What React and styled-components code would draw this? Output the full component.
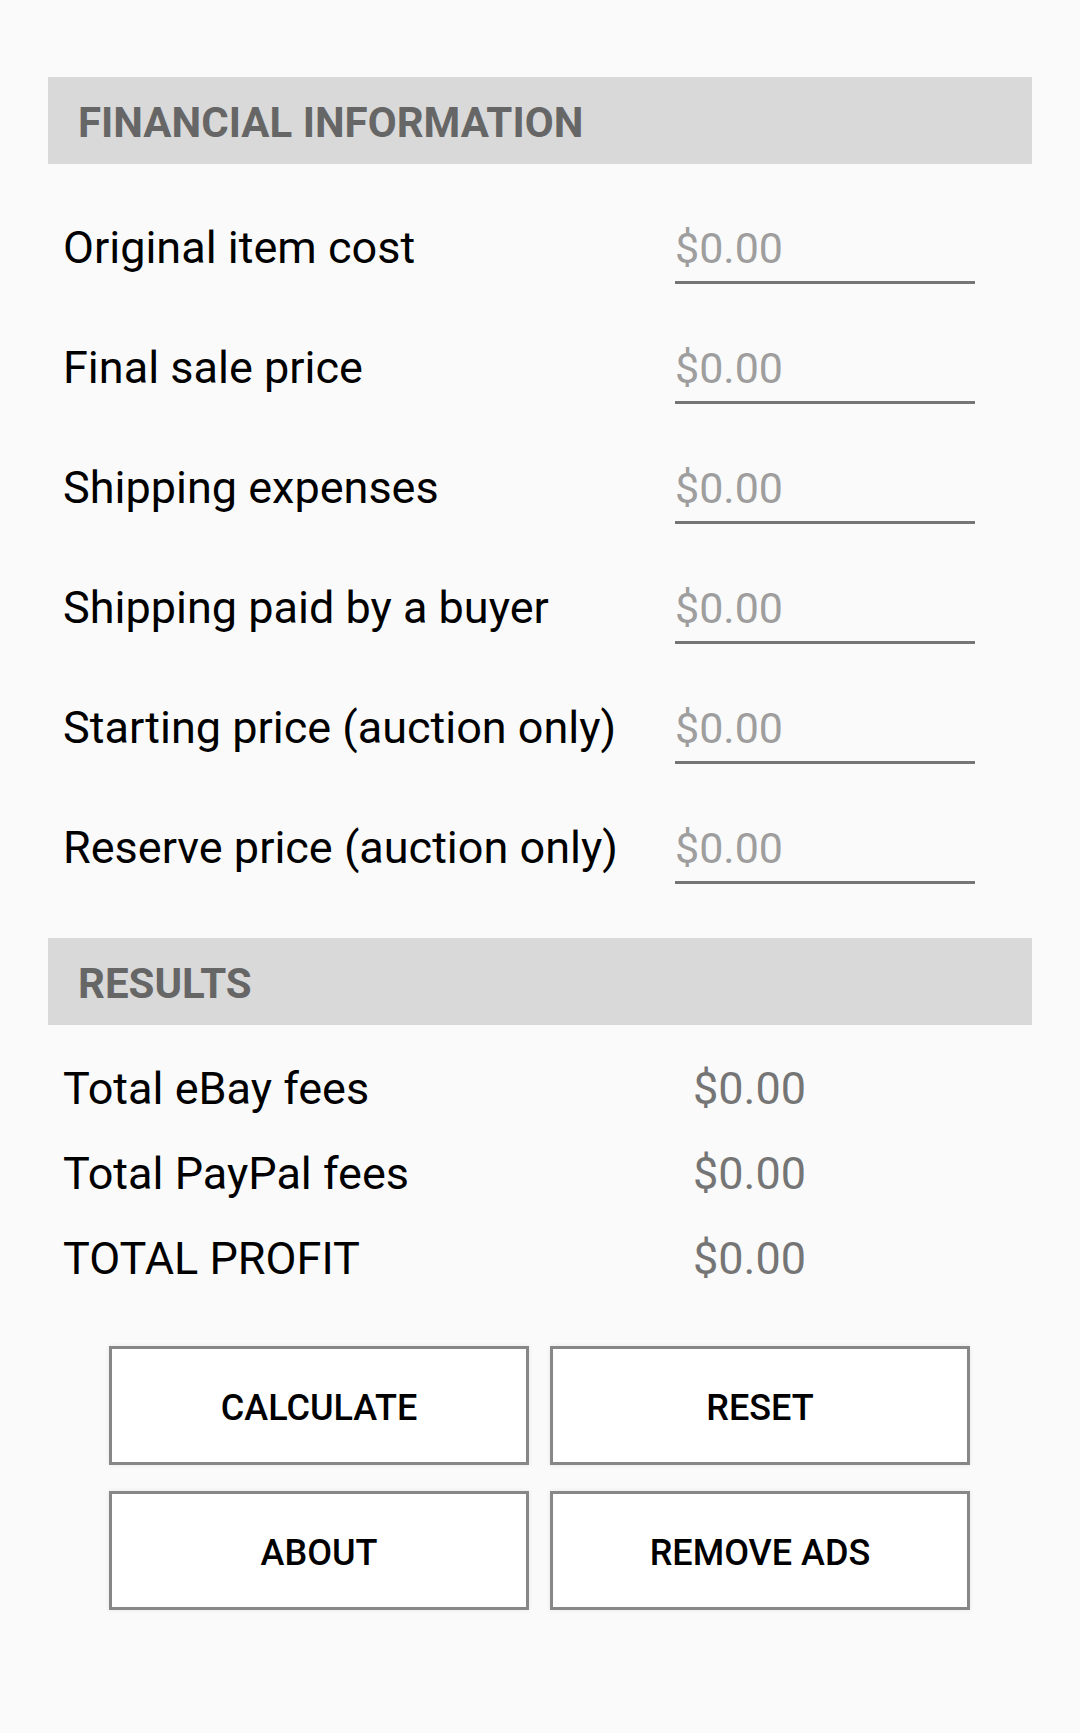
import styled, { createGlobalStyle } from 'styled-components';

const GlobalStyle = createGlobalStyle`
	html, body {
		margin: 0;
		padding: 0;
		background: #fafafa;
	}
	body {
		font-family: Roboto, "Noto Sans", sans-serif;
	}
	* {
		box-sizing: border-box;
	}
`;

const fields = [
	'Original item cost',
	'Final sale price',
	'Shipping expenses',
	'Shipping paid by a buyer',
	'Starting price (auction only)',
	'Reserve price (auction only)',
];

const results = ['Total eBay fees', 'Total PayPal fees', 'TOTAL PROFIT'];

const buttons = ['CALCULATE', 'RESET', 'ABOUT', 'REMOVE ADS'];

const Page = styled.div`
	min-height: 1733px;
	padding: 77px 48px 0;
	background: #fafafa;
`;

const SectionHeader = styled.div`
	display: flex;
	align-items: center;
	height: 87px;
	padding: 4px 0 0 30px;
	margin-top: ${(p) => (p.$first ? '0' : '54px')};
	background: #d9d9d9;
	color: #666666;
	font-size: 42px;
	font-weight: 700;
`;

const FieldRow = styled.div`
	display: flex;
	align-items: flex-end;
	height: 120px;
	padding-left: 15px;
`;

const FieldLabel = styled.label`
	width: 612px;
	margin-bottom: 10px;
	font-size: 45px;
	line-height: 52px;
	color: #000;
	white-space: nowrap;
`;

const MoneyInput = styled.input`
	width: 300px;
	height: 62px;
	padding: 0 0 7px 0;
	border: none;
	border-bottom: 3px solid #757575;
	background: transparent;
	font-family: Roboto, "Noto Sans", sans-serif;
	font-size: 43px;
	line-height: 52px;
	color: #000;
	outline: none;

	&::placeholder {
		color: #9e9e9e;
	}
`;

const ResultsList = styled.div`
	padding: 21px 0 0 15px;
`;

const ResultRow = styled.div`
	display: flex;
	height: 85px;
	align-items: center;
	font-size: 45px;
	line-height: 85px;
`;

const ResultLabel = styled.span`
	width: 630px;
	color: #000;
`;

const ResultValue = styled.span`
	color: #757575;
`;

const ButtonGrid = styled.div`
	display: grid;
	grid-template-columns: 420px 420px;
	column-gap: 21px;
	row-gap: 26px;
	justify-content: center;
	margin-top: 45px;
	padding-right: 1px;
`;

const ActionButton = styled.button`
	height: 119px;
	padding: 5px 0 0;
	border: 3px solid #878787;
	border-radius: 0;
	background: #ffffff;
	box-shadow: 0 0 5px rgba(0, 0, 0, 0.08);
	font-family: Roboto, "Noto Sans", sans-serif;
	font-size: 36px;
	font-weight: 500;
	color: #000;
	cursor: pointer;
`;

export default function App() {
	return (
		<Page>
			<GlobalStyle />
			<SectionHeader $first>FINANCIAL INFORMATION</SectionHeader>
			{fields.map((label) => (
				<FieldRow key={label}>
					<FieldLabel>{label}</FieldLabel>
					<MoneyInput type="text" placeholder="$0.00" />
				</FieldRow>
			))}
			<SectionHeader>RESULTS</SectionHeader>
			<ResultsList>
				{results.map((label) => (
					<ResultRow key={label}>
						<ResultLabel>{label}</ResultLabel>
						<ResultValue>$0.00</ResultValue>
					</ResultRow>
				))}
			</ResultsList>
			<ButtonGrid>
				{buttons.map((b) => (
					<ActionButton key={b}>{b}</ActionButton>
				))}
			</ButtonGrid>
		</Page>
	);
}
